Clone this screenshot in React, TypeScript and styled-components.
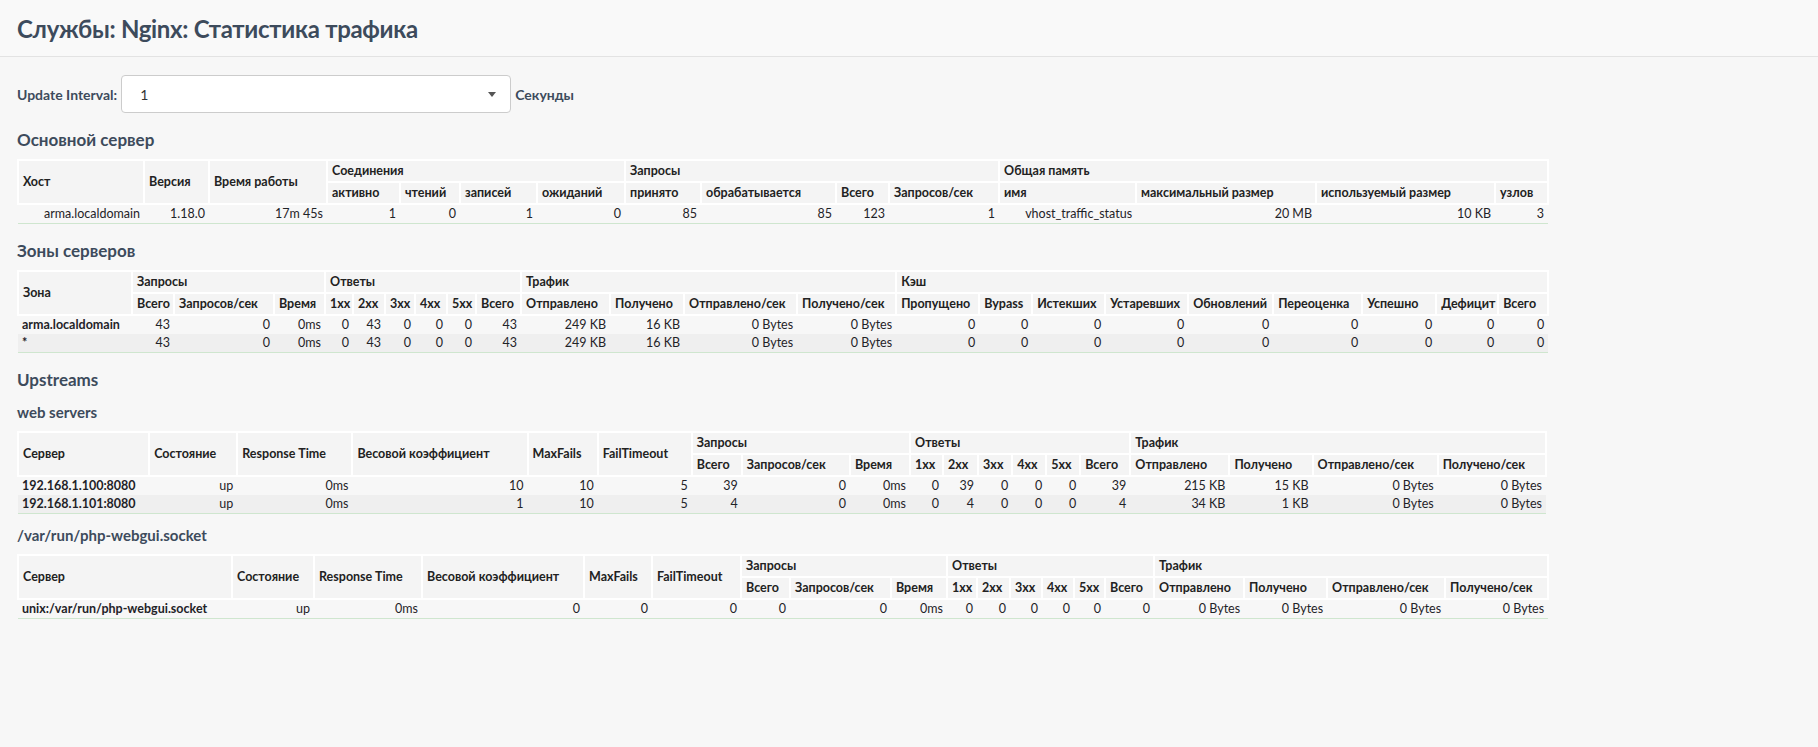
import React from "react";
import styled, { createGlobalStyle } from "styled-components";

const GlobalStyle = createGlobalStyle`
  body {
    margin: 0;
    background: #f7f7f7;
    font-family: Lato, "Noto Sans", sans-serif;
    color: #1f2328;
  }
`;

const HeaderBar = styled.div`
  height: 56px;
  display: flex;
  align-items: center;
  padding: 0 17px;
  background: #f9f9f9;
  border-bottom: 1px solid #e3e3e3;
`;

const Title = styled.h1`
  margin: 0;
  font-size: 24px;
  font-weight: 700;
  color: #3d4b5c;
  letter-spacing: -0.3px;
`;

const Content = styled.div`
  padding: 18px 17px 30px;
  width: 1530px;
`;

const IntervalRow = styled.div`
  display: flex;
  align-items: center;
  gap: 4px;
  font-size: 14px;
  font-weight: 700;
  color: #3d4b5c;
`;

const Select = styled.div`
  width: 390px;
  height: 38px;
  box-sizing: border-box;
  border: 1px solid #ccc;
  border-radius: 4px;
  background: #fff;
  display: flex;
  align-items: center;
  justify-content: space-between;
  padding: 0 14px 0 18px;
  font-weight: 400;
  color: #333;
`;

const Caret = styled.span`
  width: 0;
  height: 0;
  border-left: 4px solid transparent;
  border-right: 4px solid transparent;
  border-top: 5px solid #555;
`;

const SectionTitle = styled.h2<{ $small?: boolean }>`
  margin: ${({ $small }) => ($small ? "10px 0 8px" : "16px 0 8px")};
  font-size: ${({ $small }) => ($small ? "15px" : "17px")};
  line-height: 22px;
  font-weight: 700;
  color: #3d4b5c;
`;

const Table = styled.table`
  width: 1530px;
  table-layout: fixed;
  border-collapse: collapse;
  font-size: 12.5px;
  line-height: 16px;
  border-bottom: 1px solid #cfe6cf;
`;

const Th = styled.th`
  background: #f4f4f4;
  border: 2px solid #fff;
  text-align: left;
  font-weight: 700;
  padding: 2px 4px;
  white-space: nowrap;
  overflow: hidden;
  color: #222;
`;

const Tr = styled.tr<{ $shade?: boolean }>`
  background: ${({ $shade }) => ($shade ? "#efefef" : "transparent")};
`;

const Td = styled.td<{ $name?: boolean }>`
  padding: 1px 4px;
  text-align: ${({ $name }) => ($name ? "left" : "right")};
  font-weight: ${({ $name }) => ($name ? 700 : 400)};
  white-space: nowrap;
  overflow: hidden;
`;

type Group = { label: string; cols?: string[] };

function StatTable({
  widths,
  groups,
  rows,
  centerFirst,
}: {
  widths: number[];
  groups: Group[];
  rows: (string | number)[][];
  centerFirst?: boolean;
}) {
  return (
    <Table>
      <colgroup>
        {widths.map((w, i) => (
          <col key={i} style={{ width: w }} />
        ))}
      </colgroup>
      <thead>
        <tr>
          {groups.map((g) =>
            g.cols ? (
              <Th key={g.label} colSpan={g.cols.length}>
                {g.label}
              </Th>
            ) : (
              <Th key={g.label} rowSpan={2}>
                {g.label}
              </Th>
            )
          )}
        </tr>
        <tr>
          {groups.flatMap((g) =>
            (g.cols || []).map((c, i) => <Th key={g.label + i}>{c}</Th>)
          )}
        </tr>
      </thead>
      <tbody>
        {rows.map((r, ri) => (
          <Tr key={ri} $shade={ri % 2 === 1}>
            {r.map((v, i) => (
              <Td key={i} $name={i === 0 && !centerFirst}>
                {v}
              </Td>
            ))}
          </Tr>
        ))}
      </tbody>
    </Table>
  );
}

const codes = ["1xx", "2xx", "3xx", "4xx", "5xx", "Всего"];
const traffic = ["Отправлено", "Получено", "Отправлено/сек", "Получено/сек"];

const upstreamGroups: Group[] = [
  { label: "Сервер" },
  { label: "Состояние" },
  { label: "Response Time" },
  { label: "Весовой коэффициент" },
  { label: "MaxFails" },
  { label: "FailTimeout" },
  { label: "Запросы", cols: ["Всего", "Запросов/сек", "Время"] },
  { label: "Ответы", cols: codes },
  { label: "Трафик", cols: traffic },
];

export default function App() {
  return (
    <>
      <GlobalStyle />
      <HeaderBar>
        <Title>Службы: Nginx: Статистика трафика</Title>
      </HeaderBar>
      <Content>
        <IntervalRow>
          Update Interval:
          <Select>
            1
            <Caret />
          </Select>
          Секунды
        </IntervalRow>

        <SectionTitle>Основной сервер</SectionTitle>
        <StatTable
          centerFirst
          widths={[126, 65, 118, 73, 60, 77, 88, 76, 135, 53, 110, 137, 180, 179, 53]}
          groups={[
            { label: "Хост" },
            { label: "Версия" },
            { label: "Время работы" },
            { label: "Соединения", cols: ["активно", "чтений", "записей", "ожиданий"] },
            { label: "Запросы", cols: ["принято", "обрабатывается", "Всего", "Запросов/сек"] },
            { label: "Общая память", cols: ["имя", "максимальный размер", "используемый размер", "узлов"] },
          ]}
          rows={[
            ["arma.localdomain", "1.18.0", "17m 45s", 1, 0, 1, 0, 85, 85, 123, 1, "vhost_traffic_status", "20 MB", "10 KB", 3],
          ]}
        />

        <SectionTitle>Зоны серверов</SectionTitle>
        <StatTable
          widths={[114, 42, 100, 51, 28, 32, 30, 32, 29, 45, 89, 74, 113, 99, 83, 53, 73, 83, 85, 89, 74, 62, 50]}
          groups={[
            { label: "Зона" },
            { label: "Запросы", cols: ["Всего", "Запросов/сек", "Время"] },
            { label: "Ответы", cols: codes },
            { label: "Трафик", cols: traffic },
            {
              label: "Кэш",
              cols: ["Пропущено", "Bypass", "Истекших", "Устаревших", "Обновлений", "Переоценка", "Успешно", "Дефицит", "Всего"],
            },
          ]}
          rows={[
            ["arma.localdomain", 43, 0, "0ms", 0, 43, 0, 0, 0, 43, "249 KB", "16 KB", "0 Bytes", "0 Bytes", 0, 0, 0, 0, 0, 0, 0, 0, 0],
            ["*", 43, 0, "0ms", 0, 43, 0, 0, 0, 43, "249 KB", "16 KB", "0 Bytes", "0 Bytes", 0, 0, 0, 0, 0, 0, 0, 0, 0],
          ]}
        />

        <SectionTitle>Upstreams</SectionTitle>
        <SectionTitle $small>web servers</SectionTitle>
        <StatTable
          widths={[131, 88, 115, 175, 70, 94, 50, 108, 60, 33, 35, 34, 34, 34, 50, 99, 83, 125, 108]}
          groups={upstreamGroups}
          rows={[
            ["192.168.1.100:8080", "up", "0ms", 10, 10, 5, 39, 0, "0ms", 0, 39, 0, 0, 0, 39, "215 KB", "15 KB", "0 Bytes", "0 Bytes"],
            ["192.168.1.101:8080", "up", "0ms", 1, 10, 5, 4, 0, "0ms", 0, 4, 0, 0, 0, 4, "34 KB", "1 KB", "0 Bytes", "0 Bytes"],
          ]}
        />

        <SectionTitle $small>/var/run/php-webgui.socket</SectionTitle>
        <StatTable
          widths={[214, 82, 108, 162, 68, 89, 49, 101, 56, 30, 33, 32, 32, 31, 49, 90, 83, 118, 103]}
          groups={upstreamGroups}
          rows={[
            ["unix:/var/run/php-webgui.socket", "up", "0ms", 0, 0, 0, 0, 0, "0ms", 0, 0, 0, 0, 0, 0, "0 Bytes", "0 Bytes", "0 Bytes", "0 Bytes"],
          ]}
        />
      </Content>
    </>
  );
}
